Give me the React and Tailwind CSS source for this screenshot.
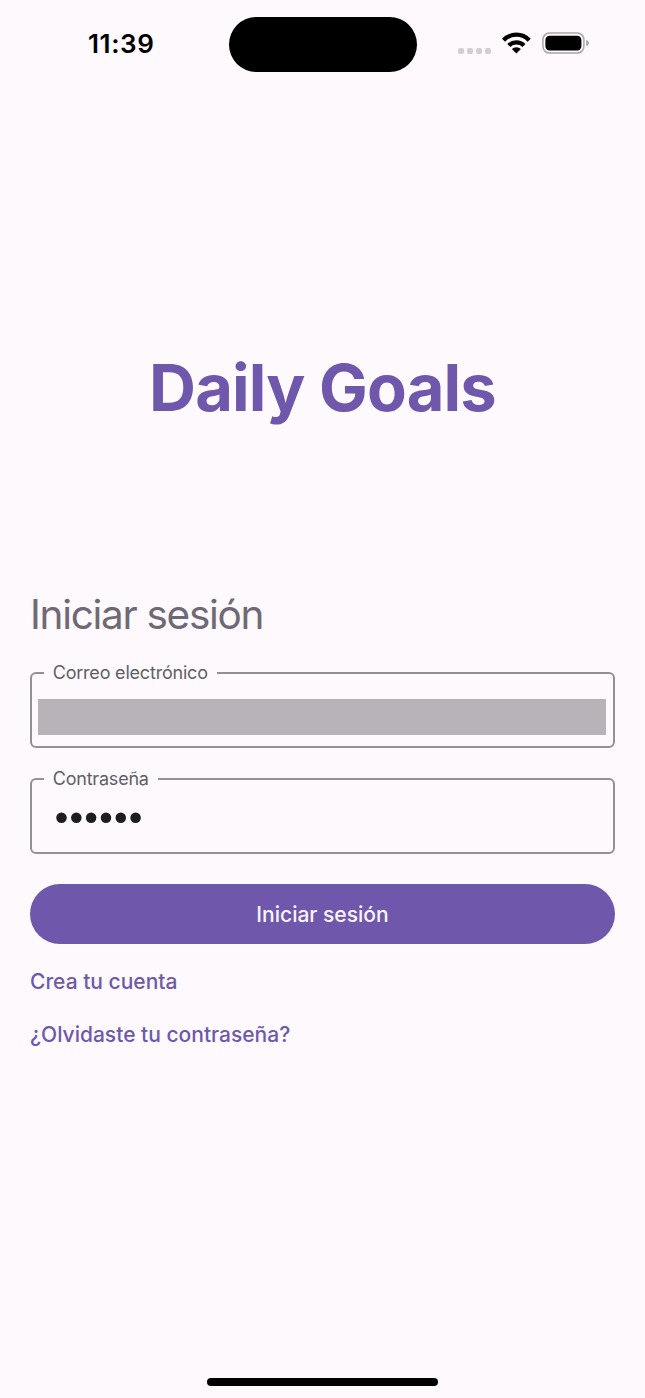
function Wifi() {
  return (
    <svg width="29" height="22" viewBox="0 0 29 22" fill="none" stroke="#000" strokeWidth="4.2">
      <path d="M1.6 8.2A17.6 17.6 0 0 1 27.2 8.2" />
      <path d="M6.8 13.4A10.9 10.9 0 0 1 22 13.4" />
      <path d="M9.9 17a6.6 6.6 0 0 1 9 0L14.4 21.4Z" fill="#000" stroke="none" />
    </svg>
  );
}

function Battery() {
  return (
    <svg width="48" height="22" viewBox="0 0 48 22" fill="none">
      <rect x="0.9" y="0.9" width="41" height="20.2" rx="6.8" stroke="#a9a5aa" strokeWidth="1.5" />
      <rect x="3.4" y="3.7" width="36" height="14.7" rx="4.2" fill="#000" />
      <path d="M44.2 8c1.8.5 2.8 1.6 2.8 3s-1 2.5-2.8 3Z" fill="#a9a5aa" />
    </svg>
  );
}

function StatusBar() {
  return (
    <header className="flex h-[88px] items-start">
      <div className="w-[228.5px] pt-[34px] pl-[88px] text-[26px] leading-5 font-semibold tracking-[0.6px] text-black">
        11:39
      </div>
      <div className="mt-[17px] h-[55px] w-[188px] rounded-full bg-black" />
      <div className="flex pt-8 pl-[41.5px]">
        <div className="mt-4 mr-[11px] flex gap-[3px]">
          {[0, 1, 2, 3].map((i) => (
            <span key={i} className="size-1.5 rounded-[2px] bg-[#d2ced3]" />
          ))}
        </div>
        <Wifi />
        <div className="ml-[11px]">
          <Battery />
        </div>
      </div>
    </header>
  );
}

function PasswordDots({ count }) {
  return (
    <svg width="90" height="12" viewBox="0 0 90 12" fill="#1f1b22">
      {Array.from({ length: count }, (_, i) => (
        <circle key={i} cx={5.5 + i * 14.82} cy="5.8" r="5.25" />
      ))}
    </svg>
  );
}

function Field({ label, children }) {
  return (
    <div className="grid h-[75px]">
      <fieldset className="-mt-2.5 h-[85px] min-w-0 rounded-[6px] border-2 border-[#949097] pl-3">
        <legend className="h-5 pr-[9px] pl-[8.7px] text-lg leading-5 tracking-[-0.2px] text-[#625e67]">
          {label}
        </legend>
        {children}
      </fieldset>
    </div>
  );
}

export default function App() {
  return (
    <div className="flex h-[1398px] w-[645px] flex-col bg-[#fdf9fd] font-['Inter',sans-serif]">
      <StatusBar />
      <h1 className="mt-[259px] text-center text-[65px] leading-[81px] font-bold tracking-[-0.85px] text-[#6f58ab]">
        Daily Goals
      </h1>
      <main className="flex flex-col px-[30px] pt-[162px]">
        <h2 className="text-[40.5px] leading-[50px] tracking-[-1.3px] text-[#706975]">Iniciar sesión</h2>
        <form className="mt-[33px] flex flex-col">
          <Field label="Correo electrónico">
            <div className="mt-4 mr-[7px] -ml-[6px] h-9 bg-[#b8b3b9]" />
          </Field>
          <div className="h-[31px]" />
          <Field label="Contraseña">
            <div className="pt-[23px] pl-[12px]">
              <PasswordDots count={6} />
            </div>
          </Field>
          <button
            type="button"
            className="mt-[30px] h-[60px] rounded-full bg-[#6f58ab] pt-0.5 text-[21px] font-medium text-[#f8f4fb]"
          >
            Iniciar sesión
          </button>
        </form>
        <a className="mt-[26px] text-[21px] leading-6 font-medium text-[#6f58ab]">Crea tu cuenta</a>
        <a className="mt-[29px] text-[21px] leading-6 font-medium text-[#6f58ab]">¿Olvidaste tu contraseña?</a>
      </main>
      <div className="mt-auto mb-3 ml-[207px] h-2 w-[231px] rounded-full bg-black" />
    </div>
  );
}
